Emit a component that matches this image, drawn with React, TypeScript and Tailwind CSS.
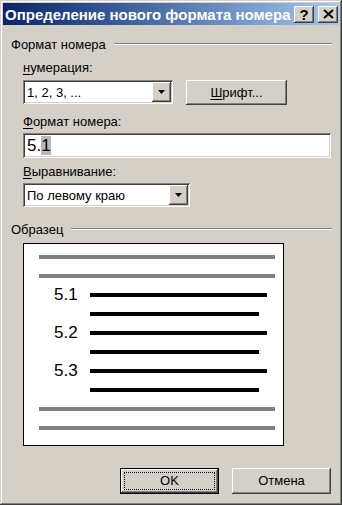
const raised =
  "shadow-[inset_-1px_-1px_0_#404040,inset_1px_1px_0_#ffffff,inset_-2px_-2px_0_#808080,inset_2px_2px_0_#d4d0c8]";
const sunken =
  "shadow-[inset_1px_1px_0_#808080,inset_-1px_-1px_0_#ffffff,inset_2px_2px_0_#404040,inset_-2px_-2px_0_#d4d0c8]";

function GroupHeader({ title }: { title: string }) {
  return (
    <div className="flex h-[16px] items-center gap-[8px]">
      <span className="leading-none">{title}</span>
      <div className="h-[2px] flex-1 border-t border-b border-t-[#808080] border-b-white" />
    </div>
  );
}

function Arrow() {
  return (
    <div className={`flex h-[20px] w-[19px] items-center justify-center bg-[#d4d0c8] ${raised}`}>
      <svg width="7" height="4" viewBox="0 0 7 4">
        <polygon points="0,0 7,0 3.5,4" fill="#000" />
      </svg>
    </div>
  );
}

function Combo({ value, width }: { value: string; width: string }) {
  return (
    <div className={`flex h-[24px] items-center bg-white pl-[4px] pr-[2px] ${sunken} ${width}`}>
      <span className="flex-1 leading-none">{value}</span>
      <Arrow />
    </div>
  );
}

function Line({ kind }: { kind: "gray" | "long" | "short" }) {
  if (kind === "gray") return <div className="ml-[15px] h-[4px] w-[236px] bg-[#808080]" />;
  return <div className={`h-[4px] bg-black ${kind === "long" ? "w-[177px]" : "w-[169px]"}`} />;
}

function SampleRow({ num, kind }: { num?: string; kind: "long" | "short" }) {
  return (
    <div className="flex h-[19px] items-center pl-[30px]">
      <span className="w-[36px] font-['Liberation_Sans',Arial,sans-serif] text-[17px] leading-none text-black">
        {num}
      </span>
      <Line kind={kind} />
    </div>
  );
}

export default function App() {
  return (
    <div
      className="flex h-[505px] w-[342px] flex-col bg-[#d4d0c8] p-[3px] font-['Liberation_Sans',Arial,sans-serif] text-[13px] text-black shadow-[inset_-1px_-1px_0_#404040,inset_1px_1px_0_#d4d0c8,inset_-2px_-2px_0_#808080,inset_2px_2px_0_#ffffff]"
    >
      <div className="flex h-[22px] items-center bg-gradient-to-r from-[#0a246a] to-[#a6caf0] pl-[2px] pr-[1px]">
        <span className="flex-1 text-[15px] font-bold leading-none text-white">
          Определение нового формата номера
        </span>
        <div className="flex gap-[4px]">
          <div className={`flex h-[17px] w-[20px] items-center justify-center bg-[#d4d0c8] ${raised}`}>
            <span className="text-[15px] font-bold leading-none">?</span>
          </div>
          <div className={`flex h-[17px] w-[20px] items-center justify-center bg-[#d4d0c8] ${raised}`}>
            <svg width="11" height="10" viewBox="0 0 11 10">
              <path d="M1 1 L10 9 M10 1 L1 9" stroke="#000" strokeWidth="2" />
            </svg>
          </div>
        </div>
      </div>

      <div className="flex flex-1 flex-col pl-[8px] pr-[7px]">
        <div className="mt-[11px]">
          <GroupHeader title="Формат номера" />
        </div>

        <div className="ml-[12px] flex flex-col">
          <div className="mt-[8px] h-[16px] leading-[16px]">
            <span className="underline underline-offset-2">н</span>умерация:
          </div>
          <div className="mt-[4px] flex gap-[13px]">
            <Combo value="1, 2, 3, ..." width="w-[150px]" />
            <div className={`flex h-[25px] w-[101px] items-center justify-center bg-[#d4d0c8] ${raised}`}>
              <span>
                <span className="underline underline-offset-2">Ш</span>рифт...
              </span>
            </div>
          </div>

          <div className="mt-[9px] h-[16px] leading-[16px]">
            <span className="underline underline-offset-2">Ф</span>ормат номера:
          </div>
          <div className={`mt-[3px] flex h-[25px] w-[308px] items-center bg-white pl-[4px] ${sunken}`}>
            <span className="text-[17px] leading-none">
              5.<span className="bg-[#b8b8b8]">1</span>
            </span>
          </div>

          <div className="mt-[6px] h-[16px] leading-[16px]">
            <span className="underline underline-offset-2">В</span>ыравнивание:
          </div>
          <div className="mt-[3px]">
            <Combo value="По левому краю" width="w-[167px]" />
          </div>
        </div>

        <div className="mt-[14px]">
          <GroupHeader title="Образец" />
        </div>

        <div className="ml-[12px] mt-[6px] flex w-[261px] flex-col border border-black bg-white pt-[3px] pb-[8px]">
          <div className="flex h-[19px] items-center"><Line kind="gray" /></div>
          <div className="flex h-[19px] items-center"><Line kind="gray" /></div>
          <SampleRow num="5.1" kind="long" />
          <SampleRow kind="short" />
          <SampleRow num="5.2" kind="long" />
          <SampleRow kind="short" />
          <SampleRow num="5.3" kind="long" />
          <SampleRow kind="short" />
          <div className="flex h-[19px] items-center"><Line kind="gray" /></div>
          <div className="flex h-[19px] items-center"><Line kind="gray" /></div>
        </div>

        <div className="mt-[22px] mr-[1px] flex justify-end gap-[13px]">
          <div className="flex h-[26px] w-[99px] items-center justify-center border border-black bg-[#d4d0c8]">
            <div className={`flex h-full w-full items-center justify-center p-[3px] ${raised}`}>
              <div className="flex h-full w-full items-center justify-center border border-dotted border-black">
                OK
              </div>
            </div>
          </div>
          <div className={`flex h-[26px] w-[99px] items-center justify-center bg-[#d4d0c8] ${raised}`}>
            Отмена
          </div>
        </div>
      </div>
    </div>
  );
}
